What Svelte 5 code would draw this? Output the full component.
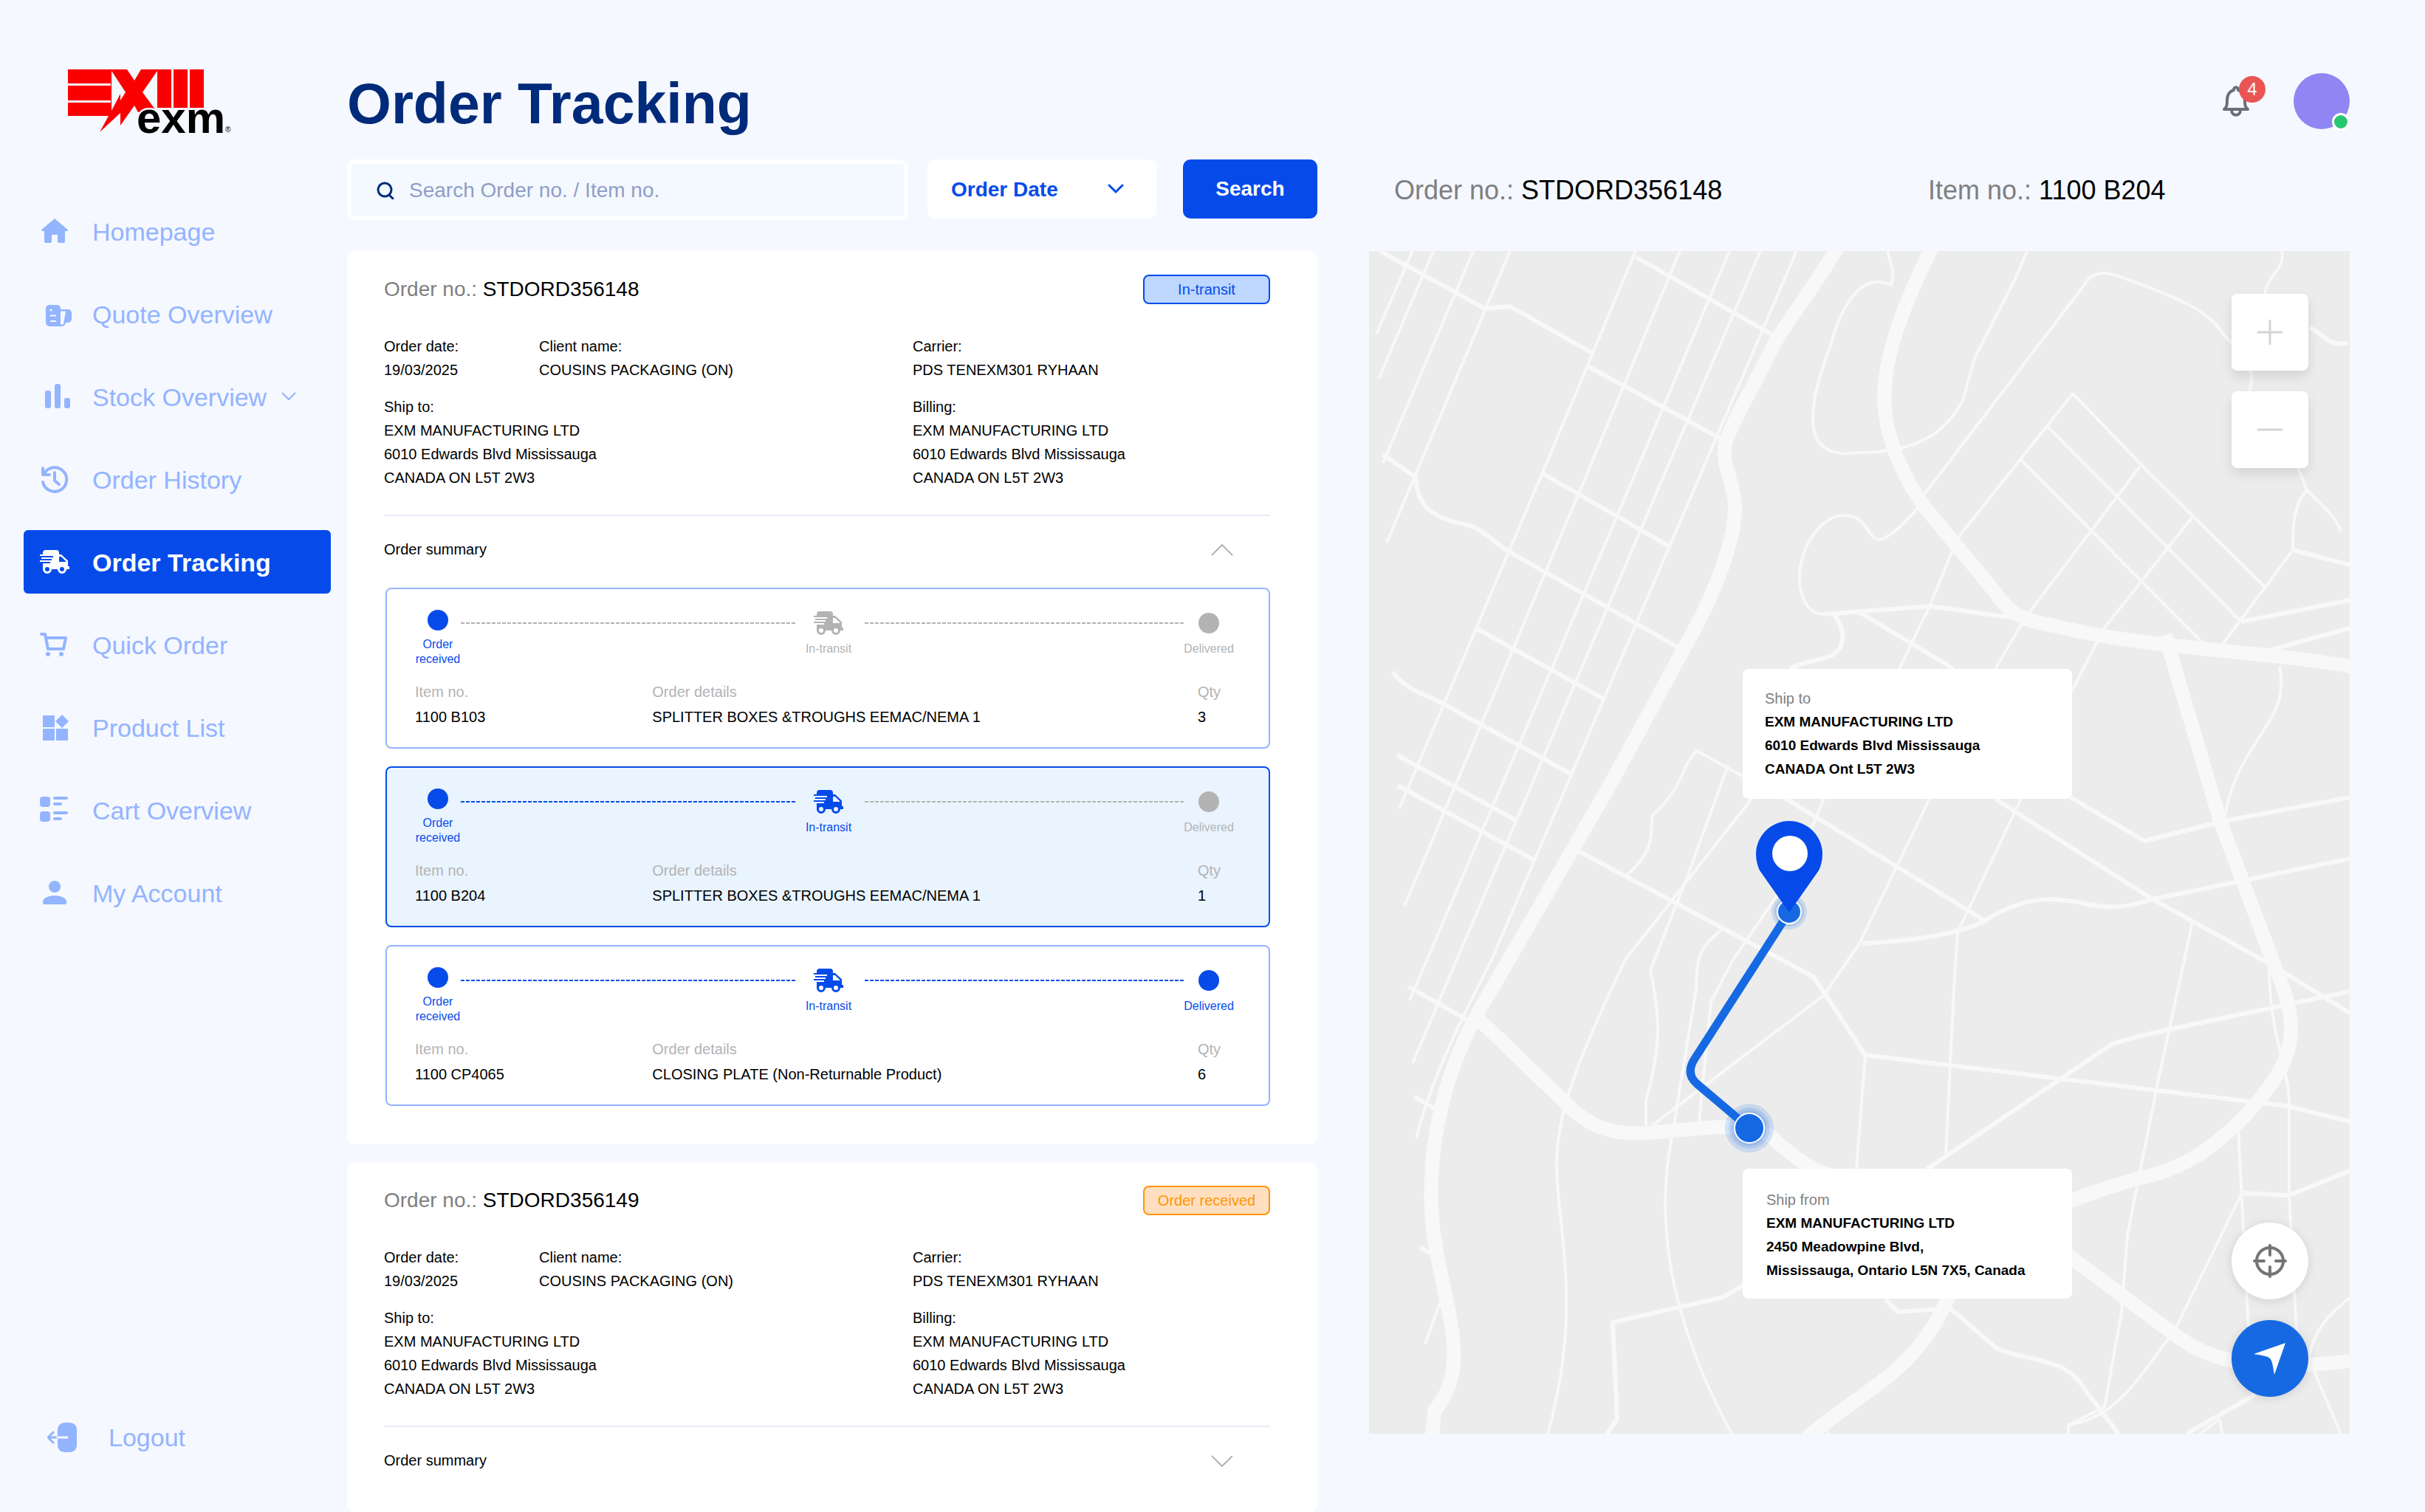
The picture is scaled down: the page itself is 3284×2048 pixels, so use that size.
<script>
    let search = '';
    let sortBy = 'Order Date';

    const nav = [
        { label: 'Homepage', icon: 'home' },
        { label: 'Quote Overview', icon: 'quote' },
        { label: 'Stock Overview', icon: 'stock', more: true },
        { label: 'Order History', icon: 'history' },
        { label: 'Order Tracking', icon: 'truck', active: true },
        { label: 'Quick Order', icon: 'cart' },
        { label: 'Product List', icon: 'product' },
        { label: 'Cart Overview', icon: 'list' },
        { label: 'My Account', icon: 'account' },
    ];

    const address = [
        'EXM MANUFACTURING LTD',
        '6010 Edwards Blvd Mississauga',
        'CANADA ON L5T 2W3',
    ];

    // stage: 1 = received, 2 = in transit, 3 = delivered
    let orders = [
        {
            number: 'STDORD356148',
            status: 'In-transit',
            statusClass: 'transit',
            open: true,
            items: [
                { number: '1100 B103', details: 'SPLITTER BOXES &TROUGHS EEMAC/NEMA 1', qty: 3, stage: 1 },
                { number: '1100 B204', details: 'SPLITTER BOXES &TROUGHS EEMAC/NEMA 1', qty: 1, stage: 2 },
                { number: '1100 CP4065', details: 'CLOSING PLATE (Non-Returnable Product)', qty: 6, stage: 3 },
            ],
        },
        {
            number: 'STDORD356149',
            status: 'Order received',
            statusClass: 'received',
            open: false,
            items: [],
        },
    ];

    const selected = '1100 B204';

    const toggle = (order) => {
        order.open = !order.open;
        orders = orders;
    };

    const highways = [
        'M634 -4C595 60 570 90 551 122C525 175 495 225 483 258C474 290 500 320 495 360C490 410 460 480 430 532L328 720L166 1000C110 1090 84 1180 84 1280C84 1400 150 1500 89 1570L85 1606',
        'M762 -4C720 80 695 150 698 210C702 260 725 310 755 350L847 461C870 495 885 500 930 508C1060 540 1200 540 1332 563',
        'M1078 520L1153 773L1225 965C1262 1050 1255 1090 1205 1150C1150 1215 1100 1245 1042 1256C960 1280 830 1320 783 1420C740 1520 670 1540 590 1610',
        'M148 1040L260 1148C300 1190 330 1196 370 1195C430 1192 510 1175 545 1200C590 1240 610 1255 700 1270C800 1290 880 1300 950 1363L1089 1466C1150 1515 1230 1515 1332 1503',
    ];

    const streets = [
        'M15 0L157 78L191 75L302 138',
        'M361 8L549 115',
        'M296 156L480 256',
        'M18 275L64 307C64 340 80 362 134 371C155 378 170 395 189 407L419 537',
        'M234 301L405 399',
        'M145 511L317 606',
        'M32 570C50 595 75 600 98 612L273 708',
        'M38 683L199 771',
        'M39 724L224 825',
        'M53 996L141 1046',
        'M61 1145L94 1165',
        'M69 1349L83 1358',
        'M284 813L602 983L672 1089L1242 1158L1328 1179',
        'M509 713L565 742L834 907C885 875 920 875 960 882C1005 893 1030 888 1061 878L1328 823',
        'M667 938C740 934 800 925 834 907',
        'M660 487L792 566',
        'M848 742L1061 878L1219 965L1328 1032',
        'M950 740L1050 799L1158 772L1328 740',
        'M1328 1003L1080 1055C1050 1062 1020 1068 1005 1075L755 1244',
        'M699 1420L716 1437L787 1432L848 1485C885 1505 941 1495 968 1540L1015 1602',
        'M509 1399L480 1417L330 1451L336 1582L322 1602',
        'M1328 1246L1246 1279L1182 1276',
        'M616 492L760 481L889 499',
        'M1181 502L1328 473',
        'M1214 542L1328 511',
        'M1251 405L1328 425',
        'M1274 104C1297 115 1295 128 1325 125',
        'M1200 1549L1107 1602',
        'M630 492C648 519 645 545 615 552C595 556 580 560 570 566',
    ];

    const lanes = [
        'M59 0L10 112',
        'M87 0L13 173',
        'M141 0L19 287',
        'M191 0L24 395',
        'M361 0L235 300L41 755',
        'M421 0L296 300L48 887',
        'M488 0L361 300L55 1015',
        'M530 0L401 300L59 1100',
        'M579 0L450 300L166 960C120 1050 85 1120 64 1201',
        'M96 1425L76 1480',
        'M672 1089L660 1244',
        'M509 713L444 677C420 700 428 725 384 764C380 790 390 810 347 847',
        'M518 742L347 960C270 1120 254 1180 254 1237C255 1330 290 1430 242 1602',
        'M486 697L430 850L381 974C395 1040 395 1080 375 1151V1184',
        'M479 918C444 945 444 960 443 1000L410 1201C390 1300 398 1430 491 1602',
        'M616 742L575 840L493 960L463 1017L447 1179',
        'M759 742L664 938L616 1008L384 1184',
        'M883 742L797 923L792 1000L781 1227',
        'M1115 909L1070 1117L1027 1332L1019 1437L996 1566L947 1590V1602',
        'M1219 960C1217 1055 1246 1110 1246 1151V1279L1256 1461L1316 1602',
        'M1182 1276L1089 1466C1050 1510 1020 1580 947 1590',
        'M1177 1187L1191 1461',
        'M1328 1418C1300 1440 1280 1460 1272 1500',
        'M1152 1582L1155 1602',
        'M1152 1582L1125 1602',
        'M618 1592L621 1602',
        'M702 0C709 25 712 30 707 46C660 25 635 90 625 128C590 220 585 285 665 273C760 273 790 230 805 200L820 145L875 38L891 0',
        'M750 332L968 47C980 25 1000 28 1020 36C1060 50 1080 58 1107 71C1154 96 1150 110 1168 124C1200 150 1198 180 1190 195',
        'M1258 294L1270 324C1290 345 1310 360 1316 380',
        'M1270 324C1250 345 1251 380 1251 405L1155 534',
        'M1235 0C1245 22 1210 38 1214 60',
        'M1047 288L889 496L848 566',
        'M953 193L797 389L760 479L718 566',
        'M953 193L1056 300L1214 456',
        'M918 237L1181 502',
        'M883 283L1131 533',
        'M1117 358L996 510L950 599',
        'M746 345C720 375 700 391 690 391C675 390 675 358 644 358C607 358 580 411 583 447C586 480 600 492 616 492',
        'M1233 563C1250 640 1175 660 1158 772',
    ];
</script>

{#snippet truck()}
    <path
        fill-rule="evenodd"
        d="M8 0h14a4 4 0 0 1 4 4v2h3l9 8.5v7.5h2v4h-4a6 6 0 0 1-12 0h-8a6 6 0 0 1-12 0V18h10v-2H0v-2h16v-2H2v-2h16V8H0V6h4V4a4 4 0 0 1 4-4zM26 9v7h10l-7-7zM10 23a3 3 0 1 0 0 6 3 3 0 0 0 0-6zM30 23a3 3 0 1 0 0 6 3 3 0 0 0 0-6z"
    />
{/snippet}

<div class="app">
    <aside>
        <svg class="logo" viewBox="0 0 230 110" role="img" aria-label="EXM">
            <path
                fill="#fb0000"
                d="M0 0H80L90 15L99 0H140V52H121V2L101 31L118 54L95 58L90 49L71 76V59L43 85L55 63H0V45H58V42H0V22H58V19H0zM59 2V56L71 33V42L78 31zM143 0h19v52h-19zM165 0h19v52h-19z"
                fill-rule="evenodd"
            />
            <text class="wordmark" x="93" y="86">exm</text>
            <text class="mark" x="213" y="85">®</text>
        </svg>

        <nav>
            {#each nav as item}
                <a href="#{item.icon}" class:active={item.active}>
                    <svg class="icon" viewBox="0 0 44 40">
                        {#if item.icon === 'home'}
                            <path d="M20 3l17.6 15c.7.8.4 2-1 2H34v14a2 2 0 0 1-2 2h-6a2 2 0 0 1-2-2v-9h-8v9a2 2 0 0 1-2 2H8a2 2 0 0 1-2-2V20H3.4c-1.4 0-1.7-1.2-1-2z" />
                        {:else if item.icon === 'quote'}
                            <path
                                fill-rule="evenodd"
                                d="M13 8h10a5 5 0 0 1 5 6h10a5 5 0 0 1 5 5v8a5 5 0 0 1-5 5h-3a6 6 0 0 1-6 5H13a5 5 0 0 1-5-5V13a5 5 0 0 1 5-5zM28 16.5v18h2.5c1 0 1.6-1 1.8-2L35 16.5zM15 13.5a1.5 1.5 0 1 0 0 3 1.5 1.5 0 0 0 0-3zM14 21.5v2h8v-2zM14 29v2h8v-2z"
                            />
                        {:else if item.icon === 'stock'}
                            <rect x="7" y="12" width="8" height="24" rx="3" />
                            <rect x="20" y="3" width="8" height="33" rx="3" />
                            <rect x="33" y="22" width="8" height="14" rx="3" />
                        {:else if item.icon === 'history'}
                            <g class="line">
                                <path d="M4 24A16.3 16.3 0 1 0 6 12" />
                                <path d="M4 5v9h9M20 11v11l6 5" />
                            </g>
                        {:else if item.icon === 'truck'}
                            <g transform="translate(0 4)">{@render truck()}</g>
                        {:else if item.icon === 'cart'}
                            <g class="line"><path d="M2 6h5l4 20h21l3-15H8" /></g>
                            <circle cx="11" cy="33" r="3" />
                            <circle cx="29" cy="33" r="3" />
                        {:else if item.icon === 'product'}
                            <path d="M4 4h16v16H4zM4 22h16v16H4zM22 22h16v16H22zM30 3l9 9-9 9-9-9z" />
                        {:else if item.icon === 'list'}
                            <rect y="2" width="14" height="14" rx="4" />
                            <rect y="22" width="14" height="14" rx="4" />
                            <g class="line"><path d="M20 4h16M20 12h8M20 24h16M20 32h8" /></g>
                        {:else}
                            <circle cx="20" cy="12" r="8" />
                            <path d="M20 24c9 0 16 4 16 8v2a2 2 0 0 1-2 2H6a2 2 0 0 1-2-2v-2c0-4 7-8 16-8z" />
                        {/if}
                    </svg>
                    <span>{item.label}</span>
                    {#if item.more}
                        <svg class="more" viewBox="0 0 20 12"><path d="M1 1l9 9 9-9" /></svg>
                    {/if}
                </a>
            {/each}
        </nav>

        <a class="logout" href="#logout">
            <svg viewBox="0 0 40 40">
                <rect x="14" width="26" height="40" rx="9" />
                <path class="arrow" d="M8 13l-7 7 7 7M1 20h13" />
                <path class="arrow inner" d="M14 20h13" />
            </svg>
            <span>Logout</span>
        </a>
    </aside>

    <main>
        <header>
            <h1>Order Tracking</h1>
            <button class="bell" type="button" aria-label="Notifications">
                <svg viewBox="0 0 40 44">
                    <path d="M4 33c4-3 4-7 4-12C8 12 13 8 17 7c0-5 6-5 6 0 4 1 9 5 9 14 0 5 0 9 4 12zM14 34c0 9 12 9 12 0" />
                </svg>
                <span class="count">4</span>
            </button>
            <button class="avatar" type="button" aria-label="Profile"><span></span></button>
        </header>

        <div class="columns">
            <section class="orders">
                <form on:submit|preventDefault>
                    <label class="search">
                        <svg viewBox="0 0 24 24"><circle cx="11" cy="11" r="9" /><path d="M17 18l5 5" /></svg>
                        <input
                            type="text"
                            bind:value={search}
                            placeholder="Search Order no. / Item no."
                            aria-label="Search orders"
                        />
                    </label>
                    <div class="sort">
                        <select bind:value={sortBy} aria-label="Sort by">
                            <option>Order Date</option>
                            <option>Client name</option>
                        </select>
                        <svg viewBox="0 0 22 14"><path d="M2 2l9 9 9-9" /></svg>
                    </div>
                    <button class="submit" type="submit">Search</button>
                </form>

                {#each orders as order}
                    <article class="order" class:open={order.open}>
                        <div class="order-head">
                            <h2><span>Order no.:</span> {order.number}</h2>
                            <p class="status {order.statusClass}">{order.status}</p>
                        </div>

                        <dl>
                            <div>
                                <dt>Order date:</dt>
                                <dd>19/03/2025</dd>
                            </div>
                            <div>
                                <dt>Client name:</dt>
                                <dd>COUSINS PACKAGING (ON)</dd>
                            </div>
                            <div>
                                <dt>Carrier:</dt>
                                <dd>PDS TENEXM301 RYHAAN</dd>
                            </div>
                            <div class="wide">
                                <dt>Ship to:</dt>
                                {#each address as line}<dd>{line}</dd>{/each}
                            </div>
                            <div>
                                <dt>Billing:</dt>
                                {#each address as line}<dd>{line}</dd>{/each}
                            </div>
                        </dl>

                        <button class="summary" type="button" on:click={() => toggle(order)}>
                            Order summary
                            <svg viewBox="0 0 30 16">
                                <path d={order.open ? 'M1 15L15 1l14 14' : 'M1 1l14 14L29 1'} />
                            </svg>
                        </button>

                        {#if order.open}
                            <div class="items">
                                {#each order.items as item}
                                    <div class="item" class:selected={item.number === selected}>
                                        <div class="steps">
                                            <div class="step done">
                                                <i class="dot"></i>
                                                <span>Order<br />received</span>
                                            </div>
                                            <svg class="track" class:done={item.stage > 1}><line x2="100%" y1="1" y2="1" /></svg>
                                            <div class="step later transit-step" class:done={item.stage > 1}>
                                                <svg class="truck" viewBox="0 0 40 32">{@render truck()}</svg>
                                                <span>In-transit</span>
                                            </div>
                                            <svg class="track" class:done={item.stage > 2}><line x2="100%" y1="1" y2="1" /></svg>
                                            <div class="step later" class:done={item.stage > 2}>
                                                <i class="dot"></i>
                                                <span>Delivered</span>
                                            </div>
                                        </div>
                                        <table>
                                            <thead>
                                                <tr><th class="number">Item no.</th><th>Order details</th><th class="qty">Qty</th></tr>
                                            </thead>
                                            <tbody>
                                                <tr><td>{item.number}</td><td>{item.details}</td><td>{item.qty}</td></tr>
                                            </tbody>
                                        </table>
                                    </div>
                                {/each}
                            </div>
                        {/if}
                    </article>
                {/each}
            </section>

            <section class="tracking">
                <div class="current">
                    <p><span>Order no.:</span> STDORD356148</p>
                    <p><span>Item no.:</span> {selected}</p>
                </div>

                <div class="map">
                    <svg class="ground" viewBox="0 0 1328 1602">
                        <g class="lanes">{#each lanes as d}<path {d} />{/each}</g>
                        <g class="streets">{#each streets as d}<path {d} />{/each}</g>
                        <g class="highways">{#each highways as d}<path {d} />{/each}</g>

                        <circle class="halo" cx="569" cy="895" r="24" />
                        <circle class="halo" cx="569" cy="895" r="20" />
                        <circle class="halo" cx="515" cy="1188" r="33" />
                        <circle class="halo" cx="515" cy="1188" r="28" />
                        <circle class="halo" cx="515" cy="1188" r="24" />
                        <path class="route" d="M569 895L441 1094Q428 1114 444 1128L515 1188" />
                        <circle class="stop" cx="569" cy="895" r="16" />
                        <circle class="stop" cx="515" cy="1188" r="20" />
                        <path class="pin" d="M569 772a45 45 0 0 1 45 45c0 8-2 16-5 22l-40 57-40-57c-3-6-5-14-5-22a45 45 0 0 1 45-45z" />
                        <circle class="pin-eye" cx="570" cy="816" r="24" />
                    </svg>

                    <address class="to">
                        <span>Ship to</span>
                        <strong>EXM MANUFACTURING LTD</strong>
                        <strong>6010 Edwards Blvd Mississauga</strong>
                        <strong>CANADA Ont L5T 2W3</strong>
                    </address>
                    <address class="from">
                        <span>Ship from</span>
                        <strong>EXM MANUFACTURING LTD</strong>
                        <strong>2450 Meadowpine Blvd,</strong>
                        <strong>Mississauga, Ontario L5N 7X5, Canada</strong>
                    </address>

                    <div class="zoom">
                        <button type="button" aria-label="Zoom in">
                            <svg viewBox="0 0 34 34"><path d="M17 0v34M0 17h34" /></svg>
                        </button>
                        <button type="button" aria-label="Zoom out">
                            <svg viewBox="0 0 34 34"><path d="M0 17h34" /></svg>
                        </button>
                    </div>
                    <div class="locate">
                        <button type="button" aria-label="Centre map">
                            <svg viewBox="0 0 46 46"><circle cx="23" cy="23" r="18" /><path d="M23 2v13M23 31v13M2 23h13M31 23h13" /></svg>
                        </button>
                        <button class="go" type="button" aria-label="Navigate">
                            <svg viewBox="0 0 46 46"><path d="M44 2L1 17c12 2 19 3 22 6s4 10 6 22z" /></svg>
                        </button>
                    </div>
                </div>
            </section>
        </div>
    </main>
</div>

<style>
    :global(body) {
        background: #f5f8ff;
        margin: 0;
    }

    .app {
        color: #000;
        display: flex;
        font-family: 'Liberation Sans', Arial, sans-serif;
        font-size: 20px;
        min-height: 100vh;
    }

    button,
    input,
    select {
        border: none;
        font-family: inherit;
        padding: 0;
    }

    button,
    select {
        cursor: pointer;
    }

    h1,
    h2,
    p,
    dl,
    dd {
        margin: 0;
    }

    svg {
        display: block;
        flex: none;
    }

    aside {
        box-sizing: border-box;
        display: flex;
        flex-direction: column;
        flex: none;
        height: 100vh;
        padding: 94px 0 58px 32px;
        position: sticky;
        top: 0;
        width: 448px;
    }

    .logo {
        height: 110px;
        margin-left: 60px;
        width: 230px;
    }

    .wordmark {
        fill: #000;
        font-size: 60px;
        font-weight: 700;
        paint-order: stroke;
        stroke: #f5f8ff;
        stroke-width: 5px;
    }

    .mark {
        font-size: 10px;
    }

    nav {
        display: flex;
        flex-direction: column;
        gap: 26px;
        margin-top: 66px;
    }

    nav a,
    .logout {
        align-items: center;
        border-radius: 6px;
        color: #93b4ff;
        display: flex;
        fill: currentColor;
        font-size: 34px;
        height: 86px;
        text-decoration: none;
    }

    nav a {
        padding-left: 22px;
    }

    nav a.active {
        background: #064bea;
        color: #fff;
        font-weight: 700;
    }

    nav span {
        padding-top: 2px;
    }

    .icon {
        height: 40px;
        margin-right: 27px;
        width: 44px;
    }

    .line {
        fill: none;
        stroke: currentColor;
        stroke-linecap: round;
        stroke-linejoin: round;
        stroke-width: 4px;
    }

    .more {
        fill: none;
        height: 12px;
        margin-left: 20px;
        stroke: currentColor;
        stroke-width: 2px;
        width: 20px;
    }

    .logout {
        gap: 43px;
        margin-top: auto;
        padding-left: 32px;
    }

    .logout svg {
        height: 40px;
        width: 40px;
    }

    .arrow {
        fill: none;
        stroke: currentColor;
        stroke-linecap: round;
        stroke-width: 3px;
    }

    .arrow.inner {
        stroke: #f5f8ff;
    }

    main {
        flex: 1;
        min-width: 0;
        padding: 99px 102px 0 22px;
    }

    header {
        align-items: center;
        display: flex;
        height: 76px;
    }

    h1 {
        color: #002b7a;
        flex: 1;
        font-size: 77px;
        line-height: 84px;
        padding-top: 6px;
    }

    .bell {
        background: none;
        margin-right: 58px;
        position: relative;
    }

    .bell svg {
        fill: none;
        height: 44px;
        stroke: #6e6b7b;
        stroke-linejoin: round;
        stroke-width: 4px;
        width: 40px;
    }

    .count {
        background: #ea5455;
        border-radius: 50%;
        color: #fff;
        font-size: 24px;
        height: 36px;
        line-height: 36px;
        position: absolute;
        right: -20px;
        top: -12px;
        width: 36px;
    }

    .avatar {
        background: #9086f3;
        border-radius: 50%;
        height: 76px;
        position: relative;
        width: 76px;
    }

    .avatar span {
        background: #28c76f;
        border: 3px solid #fff;
        border-radius: 50%;
        bottom: -2px;
        height: 18px;
        position: absolute;
        right: 0;
        width: 18px;
    }

    .columns {
        align-items: start;
        display: grid;
        gap: 70px;
        grid-template-columns: 1314fr 1328fr;
        margin-top: 41px;
    }

    form {
        align-items: start;
        display: flex;
        margin-bottom: 42px;
    }

    .search {
        align-items: center;
        background: #f4f8ff;
        border: 6px solid #fff;
        border-radius: 10px;
        box-sizing: border-box;
        display: flex;
        flex: 1;
        gap: 20px;
        height: 82px;
        margin-right: 26px;
        padding: 2px 34px 0;
    }

    .search svg {
        fill: none;
        height: 24px;
        stroke: #002b7a;
        stroke-linecap: round;
        stroke-width: 3px;
        width: 24px;
    }

    .search input {
        background: none;
        color: #002b7a;
        flex: 1;
        font-size: 28px;
        min-width: 0;
        outline: none;
    }

    .search input::placeholder {
        color: #8f9ec5;
        opacity: 1;
    }

    .sort {
        align-items: center;
        display: grid;
        margin-right: 36px;
        width: 310px;
    }

    .sort select {
        appearance: none;
        background: #fff;
        border-radius: 10px;
        color: #064bea;
        font-size: 28px;
        font-weight: 700;
        grid-area: 1 / 1;
        height: 80px;
        padding-left: 32px;
    }

    .sort svg {
        fill: none;
        grid-area: 1 / 1;
        height: 14px;
        justify-self: end;
        margin-right: 44px;
        pointer-events: none;
        stroke: #064bea;
        stroke-linecap: round;
        stroke-width: 3px;
        width: 22px;
    }

    .submit {
        background: #064bea;
        border-radius: 10px;
        color: #fff;
        font-size: 28px;
        font-weight: 700;
        height: 80px;
        width: 182px;
    }

    .order {
        background: #fff;
        border-radius: 10px;
        padding: 32px 64px 18px 50px;
    }

    .order.open {
        padding-bottom: 52px;
    }

    .order + .order {
        margin-top: 24px;
    }

    .order-head {
        align-items: center;
        display: flex;
        justify-content: space-between;
        margin-bottom: 41px;
    }

    h2 {
        font-size: 28px;
        font-weight: 400;
    }

    h2 span,
    .current span {
        color: #7f7f7f;
    }

    .status {
        border: 2px solid;
        border-radius: 8px;
        box-sizing: border-box;
        height: 40px;
        line-height: 36px;
        text-align: center;
        width: 172px;
    }

    .transit {
        background: #bdd7ff;
        color: #064bea;
    }

    .received {
        background: #ffdfbf;
        color: #ff9500;
    }

    dl {
        display: grid;
        grid-template-columns: 210fr 506fr 484fr;
        line-height: 32px;
        padding-bottom: 34px;
        row-gap: 18px;
    }

    .wide {
        grid-column: span 2;
    }

    .summary {
        align-items: center;
        background: none;
        border-top: 2px solid #e8ecf8;
        color: #000;
        display: flex;
        font-size: 20px;
        height: 99px;
        justify-content: space-between;
        padding: 0 50px 6px 0;
        width: 100%;
    }

    .summary svg {
        fill: none;
        height: 16px;
        stroke: #b3b3b3;
        stroke-width: 2px;
        width: 30px;
    }

    .items {
        display: flex;
        flex-direction: column;
        gap: 24px;
        margin-left: 2px;
    }

    .item {
        border: 2px solid #93b4ff;
        border-radius: 8px;
        padding: 28px 48px 24px 38px;
    }

    .item.selected {
        background: #eaf4ff;
        border-color: #064bea;
    }

    .steps {
        color: #b3b3b3;
        display: grid;
        font-size: 16px;
        grid-template-columns: 62px 455fr 92px 433fr 66px;
        line-height: 20px;
        margin-bottom: 17px;
    }

    .step {
        align-items: center;
        display: flex;
        flex-direction: column;
        gap: 9px;
        text-align: center;
    }

    .later {
        margin-top: 2px;
    }

    .later .dot {
        margin: 2px 0;
    }

    .transit-step {
        padding-right: 6px;
    }

    .done {
        color: #064bea;
    }

    .dot {
        background: currentColor;
        border-radius: 50%;
        height: 28px;
        width: 28px;
    }

    .truck {
        fill: currentColor;
        height: 32px;
        width: 40px;
    }

    .track {
        height: 2px;
        margin-top: 17px;
        stroke: currentColor;
        stroke-dasharray: 5 2;
        stroke-width: 2px;
        width: 100%;
    }

    table {
        border-collapse: collapse;
        line-height: 34px;
        table-layout: fixed;
        text-align: left;
        width: 100%;
    }

    th {
        color: #b3b3b3;
        font-weight: 400;
    }

    th,
    td {
        padding: 0;
    }

    .number {
        width: 29%;
    }

    .qty {
        width: 48px;
    }

    .current {
        align-items: center;
        box-sizing: border-box;
        display: grid;
        font-size: 36px;
        grid-template-columns: 723fr 571fr;
        height: 82px;
        margin-bottom: 42px;
        padding: 2px 0 0 34px;
    }

    .map {
        position: relative;
    }

    .ground {
        background: #ececec;
        fill: none;
        height: auto;
        width: 100%;
    }

    .lanes,
    .streets,
    .highways {
        stroke: #f8f8f8;
        stroke-width: 4px;
    }

    .streets {
        stroke-width: 6px;
    }

    .highways {
        stroke-width: 19px;
    }

    .halo {
        fill: #1669e3;
        opacity: 0.15;
    }

    .route {
        stroke: #1669e3;
        stroke-width: 11px;
    }

    .stop {
        fill: #1669e3;
        stroke: #fff;
        stroke-width: 2px;
    }

    .pin {
        fill: #064bea;
    }

    .pin-eye {
        fill: #fff;
    }

    address {
        background: #fff;
        border-radius: 8px;
        display: flex;
        flex-direction: column;
        font-style: normal;
        left: 38.1%;
        line-height: 32px;
        padding: 24px 0 24px 30px;
        position: absolute;
        width: 416px;
    }

    address span {
        color: #7f7f7f;
    }

    address strong {
        font-size: 19px;
    }

    .to {
        top: 35.3%;
    }

    .from {
        padding: 26px 0 22px 32px;
        top: 77.6%;
        width: 414px;
    }

    .zoom,
    .locate {
        display: flex;
        flex-direction: column;
        gap: 28px;
        position: absolute;
        right: 56px;
        top: 58px;
    }

    .locate {
        bottom: 50px;
        top: auto;
    }

    .zoom button,
    .locate button {
        align-items: center;
        background: #fff;
        border-radius: 8px;
        box-shadow: 0 8px 16px rgba(0, 0, 0, 0.1);
        display: flex;
        height: 104px;
        justify-content: center;
        width: 104px;
    }

    .locate button {
        border-radius: 50%;
        box-shadow: 0 2px 14px rgba(0, 0, 0, 0.12);
    }

    .zoom svg {
        height: 34px;
        stroke: #d4d4d4;
        stroke-width: 3px;
        width: 34px;
    }

    .locate svg {
        fill: none;
        height: 46px;
        stroke: #757575;
        stroke-linecap: round;
        stroke-width: 4px;
        width: 46px;
    }

    .locate .go {
        background: #1669e3;
    }

    .locate .go svg {
        fill: #fff;
        stroke: none;
    }
</style>
